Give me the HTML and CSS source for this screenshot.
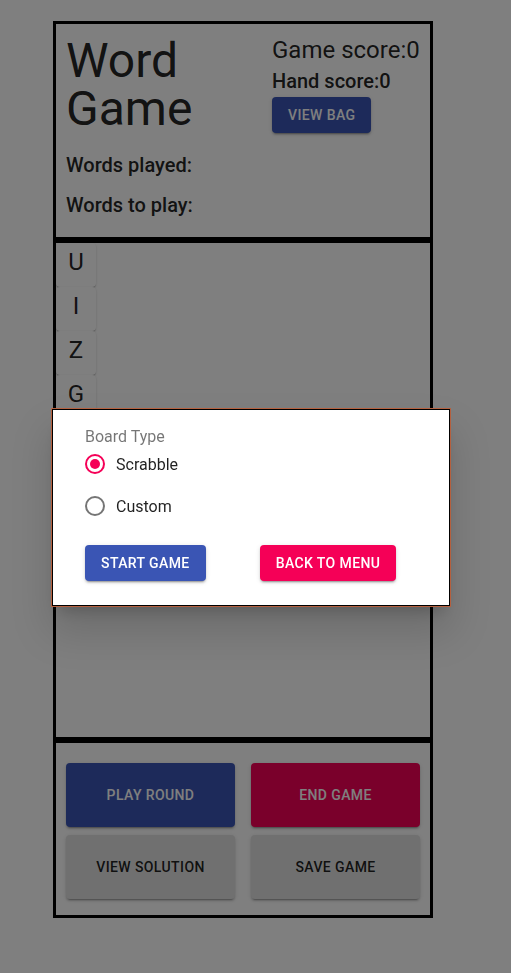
FILE: index.html
```html
<!DOCTYPE html>
<html lang="en">
<head>
    <meta charset="UTF-8">
    <meta name="viewport" content="width=device-width, initial-scale=1.0">
    <title>Word Game</title>
    <link rel="stylesheet" href="styles.css">
</head>
<body>
    <div class="game">
        <div class="box header">
            <div class="header-left">
                <h1 class="title">Word<br>Game</h1>
                <h6 class="words-line">Words played:</h6>
                <h6 class="words-line">Words to play:</h6>
            </div>
            <div class="header-right">
                <div class="game-score">Game score:0</div>
                <h6 class="hand-score">Hand score:0</h6>
                <button class="btn btn-primary">View Bag</button>
            </div>
        </div>

        <div class="box board">
            <div class="hand">
                <div class="tile">U</div>
                <div class="tile">I</div>
                <div class="tile">Z</div>
                <div class="tile">G</div>
                <div class="tile">E</div>
                <div class="tile">A</div>
                <div class="tile">R</div>
            </div>
        </div>

        <div class="box controls">
            <button class="btn btn-primary btn-big">Play Round</button>
            <button class="btn btn-secondary btn-big">End Game</button>
            <button class="btn btn-default btn-big">View Solution</button>
            <button class="btn btn-default btn-big">Save Game</button>
        </div>
    </div>

    <!-- start dialog over the page -->
    <div class="backdrop"></div>
    <div class="dialog">
        <div class="dialog-label">Board Type</div>
        <label class="radio-row">
            <span class="radio checked"></span>
            <span>Scrabble</span>
        </label>
        <label class="radio-row">
            <span class="radio"></span>
            <span>Custom</span>
        </label>
        <div class="dialog-actions">
            <button class="btn btn-primary">Start Game</button>
            <button class="btn btn-secondary">Back to Menu</button>
        </div>
    </div>
</body>
</html>
```

FILE: styles.css
```css
body {
    margin: 0;
    background-color: #fff;
    color: rgba(0, 0, 0, 0.87);
    font-family: Roboto, "Liberation Sans", sans-serif;
}
.game {
    width: 380px;
    margin: 21px 0 0 53px;
}
.box {
    border: 3px solid #000;
    box-sizing: border-box;
}
.header {
    height: 219px;
    display: flex;
    justify-content: space-between;
    padding: 10px;
}
.header-left {
    padding-top: 3px;
}
.title {
    margin: 0 0 16px 0;
    font-size: 48px;
    font-weight: 400;
    line-height: 48px;
}
.words-line {
    margin: 0 0 8px 0;
    font-size: 20px;
    font-weight: 500;
    line-height: 32px;
}
.header-right {
    width: 148px;
}
.game-score {
    font-size: 24px;
    line-height: 32px;
    white-space: nowrap;
}
.hand-score {
    margin: 0;
    font-size: 20px;
    font-weight: 500;
    line-height: 31px;
}
.board {
    height: 500px;
}
.hand {
    width: 40px;
}
.tile {
    height: 44px;
    box-sizing: border-box;
    padding-bottom: 6px;
    border-radius: 4px;
    background-color: #fff;
    box-shadow: 0 2px 1px -1px rgba(0,0,0,0.2), 0 1px 1px 0 rgba(0,0,0,0.14), 0 1px 3px 0 rgba(0,0,0,0.12);
    font-size: 24px;
    line-height: 38px;
    text-align: center;
}
.controls {
    height: 178px;
    display: grid;
    grid-template-columns: 1fr 1fr;
    grid-auto-rows: 64px;
    column-gap: 16px;
    row-gap: 8px;
    padding: 20px 10px 16px 10px;
}
.btn {
    font-family: Roboto, "Liberation Sans", sans-serif;
    font-size: 14px;
    font-weight: 500;
    line-height: 24px;
    letter-spacing: 0.4px;
    text-transform: uppercase;
    white-space: nowrap;
    padding: 6px 16px;
    border: none;
    border-radius: 4px;
    cursor: pointer;
    box-shadow: 0 3px 1px -2px rgba(0,0,0,0.2), 0 2px 2px 0 rgba(0,0,0,0.14), 0 1px 5px 0 rgba(0,0,0,0.12);
}
.btn-primary {
    background-color: #3a55b4;
    color: #fff;
}
.btn-secondary {
    background-color: #f50057;
    color: #fff;
}
.btn-default {
    background-color: #e0e0e0;
    color: rgba(0, 0, 0, 0.87);
}
.btn-big {
    height: 64px;
}
.header-right .btn {
    height: 36px;
}
.backdrop {
    position: fixed;
    top: 0;
    left: 0;
    right: 0;
    bottom: 0;
    background-color: rgba(0, 0, 0, 0.5);
}
.dialog {
    position: absolute;
    left: 52px;
    top: 409px;
    width: 398px;
    height: 197px;
    box-sizing: border-box;
    background-color: #fff;
    border: 1px solid #000;
    box-shadow: 0 0 0 1px #b5603f, 0 11px 15px -7px rgba(0,0,0,0.2), 0 24px 38px 3px rgba(0,0,0,0.14);
    padding: 15px 32px 0 32px;
}
.dialog-label {
    color: rgba(0, 0, 0, 0.54);
    font-size: 16px;
    line-height: 24px;
    margin-bottom: -6px;
}
.radio-row {
    display: flex;
    align-items: center;
    height: 42px;
    font-size: 16px;
    cursor: pointer;
}
.radio {
    width: 16px;
    height: 16px;
    border: 2px solid rgba(0, 0, 0, 0.54);
    border-radius: 50%;
    margin-right: 11px;
    position: relative;
}
.radio.checked {
    border-color: #f50057;
}
.radio.checked::after {
    content: "";
    position: absolute;
    left: 3px;
    top: 3px;
    width: 10px;
    height: 10px;
    border-radius: 50%;
    background-color: #f50057;
}
.dialog-actions {
    display: flex;
    gap: 54px;
    margin-top: 18px;
}
```
